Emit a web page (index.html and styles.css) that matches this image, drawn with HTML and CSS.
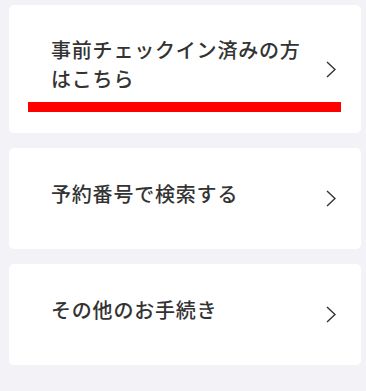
FILE: index.html
```html
<!DOCTYPE html>
<html lang="ja">
<head>
    <meta charset="UTF-8">
    <meta name="viewport" content="width=device-width, initial-scale=1.0">
    <title>チェックイン</title>
    <link rel="stylesheet" href="styles.css">
</head>
<body>
    <div class="menu">
        <a class="menu-item menu-item-marked" href="#">
            <span class="menu-label">事前チェックイン済みの方<br>はこちら</span>
            <svg class="chevron" width="10" height="17" viewBox="0 0 10 17"><path d="M1 1 L9 8.5 L1 16" fill="none" stroke="#333" stroke-width="1.4"/></svg>
            <span class="mark"></span>
        </a>
        <a class="menu-item" href="#">
            <span class="menu-label">予約番号で検索する</span>
            <svg class="chevron" width="10" height="17" viewBox="0 0 10 17"><path d="M1 1 L9 8.5 L1 16" fill="none" stroke="#333" stroke-width="1.4"/></svg>
        </a>
        <a class="menu-item" href="#">
            <span class="menu-label">その他のお手続き</span>
            <svg class="chevron" width="10" height="17" viewBox="0 0 10 17"><path d="M1 1 L9 8.5 L1 16" fill="none" stroke="#333" stroke-width="1.4"/></svg>
        </a>
    </div>
</body>
</html>
```

FILE: styles.css
```css
html, body {
    margin: 0;
    padding: 0;
    background-color: #f2f2f7;
}
body {
    font-family: "Noto Sans CJK JP", "Noto Sans", sans-serif;
    color: #333;
}
.menu {
    display: flex;
    flex-direction: column;
    gap: 15px;
    padding: 5px 5px 0 9px;
}
.menu-item {
    position: relative;
    display: flex;
    align-items: center;
    justify-content: space-between;
    min-height: 101px;
    box-sizing: border-box;
    padding: 31px 25px 31px 42px;
    background-color: #fff;
    border-radius: 5px;
    text-decoration: none;
    color: inherit;
}
.menu-item-marked {
    padding-top: 30px;
    padding-bottom: 30px;
}
.menu-label {
    font-size: 20px;
    font-weight: 500;
    line-height: 29px;
    letter-spacing: 0.8px;
    margin-bottom: 10px;
}
.chevron {
    flex-shrink: 0;
}
.mark {
    position: absolute;
    left: 19px;
    top: 97px;
    width: 313px;
    height: 10px;
    background-color: #ff0000;
}
```
